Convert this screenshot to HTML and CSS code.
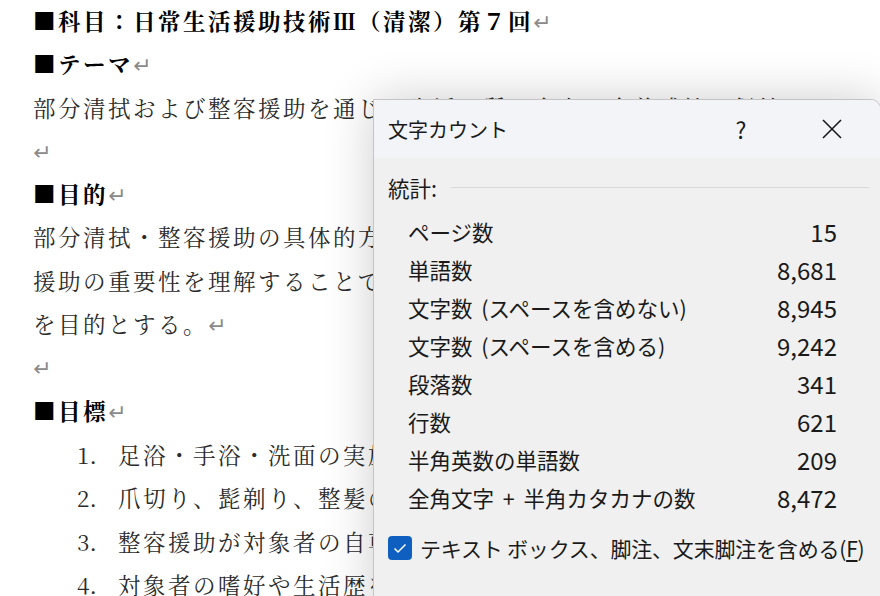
FILE: index.html
```html
<!DOCTYPE html>
<html>
<head>
<title>文字カウント</title>
<meta charset="utf-8">
<link rel="stylesheet" href="styles.css">
</head>
<body>

<div id="doc">
<p class="head">■科目：日常生活援助技術Ⅲ（清潔）第７回<span class="ret">↵</span></p>
<p class="head">■テーマ<span class="ret">↵</span></p>
<p>部分清拭および整容援助を通じた生活の質の向上と自尊感情の保持<span class="ret">↵</span></p>
<p><span class="ret">↵</span></p>
<p class="head">■目的<span class="ret">↵</span></p>
<p>部分清拭・整容援助の具体的方法を習得し、対象者の生活の質を高める</p>
<p>援助の重要性を理解することで、自立支援に向けた看護実践力の向上</p>
<p>を目的とする。<span class="ret">↵</span></p>
<p><span class="ret">↵</span></p>
<p class="head">■目標<span class="ret">↵</span></p>
<ol>
<li><span class="num">1.</span>足浴・手浴・洗面の実施方法を理解し、安全に実施できる。</li>
<li><span class="num">2.</span>爪切り、髭剃り、整髪の方法を理解し、実施できる。</li>
<li><span class="num">3.</span>整容援助が対象者の自尊心に与える影響を説明できる。</li>
<li><span class="num">4.</span>対象者の嗜好や生活歴を尊重した援助を考えることができる。</li>
</ol>
</div>

<!-- word count dialog, lies over the document -->
<div id="dialog">
<div class="titlebar">
<span class="title">文字カウント</span>
<span class="help">?</span>
<span class="close">
<svg width="20" height="20" viewBox="0 0 20 20"><path d="M1 1L19 19M19 1L1 19" stroke="#1a1a1a" stroke-width="1.6" fill="none"/></svg>
</span>
</div>
<div class="body">
<div class="group"><span>統計:</span><span class="rule"></span></div>
<div class="stats">
<div class="row"><span>ページ数</span><span class="val">15</span></div>
<div class="row"><span>単語数</span><span class="val">8,681</span></div>
<div class="row"><span>文字数 (スペースを含めない)</span><span class="val">8,945</span></div>
<div class="row"><span>文字数 (スペースを含める)</span><span class="val">9,242</span></div>
<div class="row"><span>段落数</span><span class="val">341</span></div>
<div class="row"><span>行数</span><span class="val">621</span></div>
<div class="row"><span>半角英数の単語数</span><span class="val">209</span></div>
<div class="row"><span>全角文字 + 半角カタカナの数</span><span class="val">8,472</span></div>
</div>
<div class="check">
<span class="box"><svg width="24" height="24" viewBox="0 0 24 24"><path d="M6.5 12.5L10 16L17.5 8.5" stroke="#fff" stroke-width="1.5" fill="none"/></svg></span>
<span>テキスト ボックス、脚注、文末脚注を含める(<u>F</u>)</span>
</div>
</div>
</div>

</body>
</html>
```

FILE: styles.css
```css
body{
margin:0;
background-color:#FFF;
overflow:hidden;
width:880px;
height:596px;
position:relative;
}

#doc{
padding:0 0 0 33px;
font-family:"Noto Serif CJK JP","Noto Sans CJK JP",serif;
font-size:22.5px;
color:#2b2b2b;
white-space:nowrap;
}
#doc p{margin:0;height:43.3px;line-height:41px;letter-spacing:2.5px;}
#doc .head{font-weight:bold;color:#000;letter-spacing:2.5px;font-size:22.5px;}
.ret{font-family:"DejaVu Sans",sans-serif;font-size:22px;color:#8a8a8a;font-weight:normal;letter-spacing:0;line-height:1;}
ol{margin:0;padding:0 0 0 44px;list-style:none;}
li{height:43.3px;line-height:43px;letter-spacing:2.5px;display:flex;}
.num{width:41px;letter-spacing:0;}

#dialog{
position:absolute;
left:373px;
top:99px;
width:506px;
height:520px;
background-color:#F0F0F0;
border:1px solid #C4C4C4;
border-radius:0 10px 0 0;
box-shadow:0px 0px 50px rgba(0,0,0,0.2);
font-family:"Noto Sans CJK JP",sans-serif;
color:#1a1a1a;
overflow:hidden;
}
.titlebar{
display:flex;
align-items:center;
height:58px;
background-color:#F2F4F7;
padding:0 0 0 14px;
font-size:20px;
}
.title{flex:1;}
.help{width:40px;text-align:center;font-size:23px;}
.close{width:40px;margin:0 28px 0 51px;display:flex;justify-content:center;}

.body{padding:16px 0 0 14px;font-size:21.5px;}
.group{display:flex;align-items:center;height:26px;}
.rule{flex:1;height:1px;background-color:#D8D8D8;margin:0 11px 0 14px;}
.stats{padding:12px 43px 0 20px;word-spacing:4px;}
.row{display:flex;justify-content:space-between;height:38px;align-items:center;}
.val{font-size:24px;}
.check{display:flex;align-items:center;margin:17px 0 0 0;gap:8px;font-size:21px;letter-spacing:-0.2px;}
.box{width:24px;height:24px;border-radius:4px;background-color:#0F5FC0;display:flex;}
u{text-underline-offset:3px;}
```
